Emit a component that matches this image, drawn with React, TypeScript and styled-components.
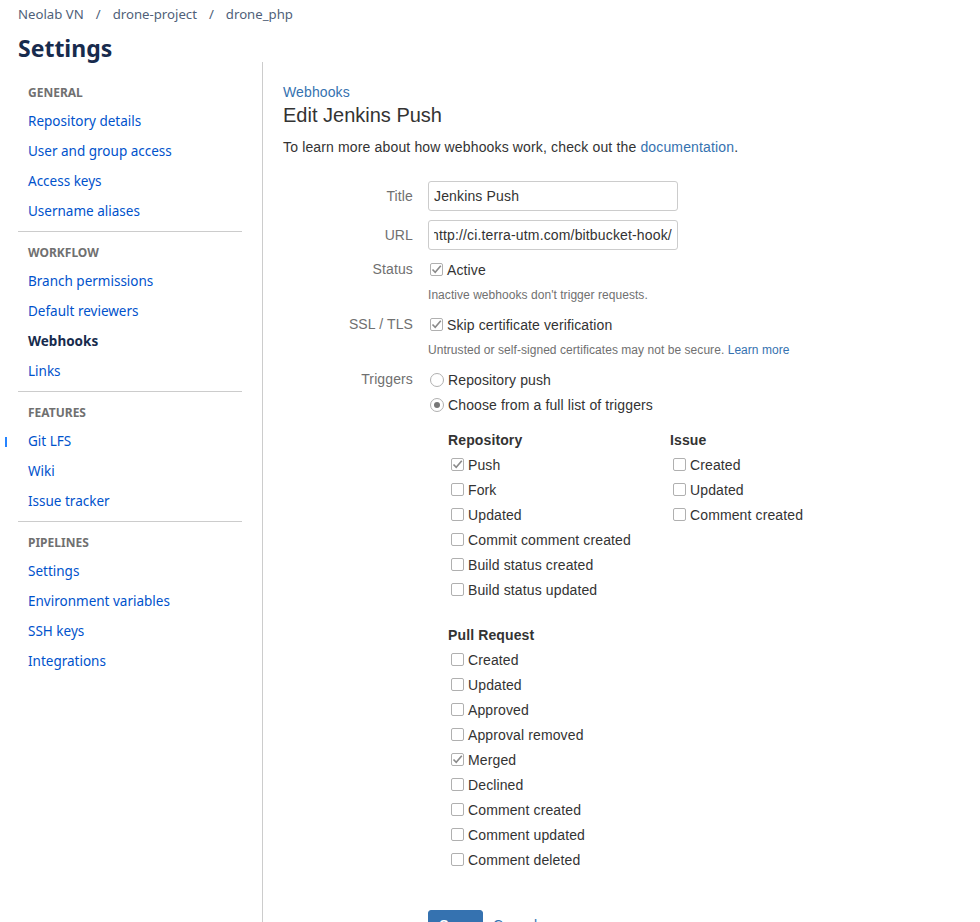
import React, { useEffect, useRef } from "react";
import styled, { createGlobalStyle } from "styled-components";

const Global = createGlobalStyle`
  html, body { margin: 0; padding: 0; background: #fff; overflow: hidden; }
  * { box-sizing: border-box; }
`;

const Page = styled.div`
  position: relative;
  width: 980px;
  height: 922px;
  overflow: hidden;
  display: flex;
  flex-direction: column;
`;

const Header = styled.header`
  padding: 4px 18px 0 18px;
  font-family: "Noto Sans", "Open Sans", sans-serif;
`;

const Crumbs = styled.nav`
  display: flex;
  align-items: center;
  height: 20px;
  font-size: 13.2px;
  color: #505f79;
  gap: 12px;
`;

const Crumb = styled.span``;
const Slash = styled.span`
  color: #505f79;
`;

const Title = styled.h1`
  margin: 10px 0 0 0;
  font-size: 23px;
  line-height: 28px;
  font-weight: 700;
  color: #172b4d;
`;

const Body = styled.div`
  display: flex;
  flex: 1;
`;

const Sidebar = styled.aside`
  width: 263px;
  padding: 18px 20px 0 18px;
  border-right: 1px solid #ccc;
  font-family: "Noto Sans", "Open Sans", sans-serif;
`;

const Section = styled.div<{ $last?: boolean }>`
  padding-bottom: 5px;
  margin-bottom: 8px;
  border-bottom: ${(p) => (p.$last ? "none" : "1px solid #ccc")};
`;

const SectionTitle = styled.div`
  height: 26px;
  line-height: 26px;
  padding-left: 10px;
  font-size: 12px;
  font-weight: 700;
  color: #707070;
  text-transform: uppercase;
`;

const NavItem = styled.a<{ $active?: boolean }>`
  display: block;
  height: 30px;
  line-height: 30px;
  padding-left: 10px;
  font-size: 13.5px;
  color: ${(p) => (p.$active ? "#172b4d" : "#0052cc")};
  font-weight: ${(p) => (p.$active ? 700 : 400)};
  text-decoration: none;
  cursor: pointer;
`;

const Grip = styled.div`
  position: absolute;
  left: 5px;
  top: 437px;
  width: 2px;
  height: 10px;
  background: #2684ff;
`;

const Main = styled.main`
  flex: 1;
  padding: 20px 0 0 20px;
  font-family: "Liberation Sans", Arial, sans-serif;
  color: #333;
  font-size: 14px;
  letter-spacing: 0.12px;
`;

const BackLink = styled.a`
  display: block;
  line-height: 20px;
  font-size: 14px;
  color: #3572b0;
  text-decoration: none;
`;

const Heading = styled.h2`
  margin: 1px 0 0 0;
  font-size: 20px;
  line-height: 24px;
  font-weight: 400;
  letter-spacing: 0;
  color: #333;
`;

const Intro = styled.p`
  margin: 10px 0 0 0;
  line-height: 20px;
  letter-spacing: 0.15px;
`;

const Link = styled.a`
  color: #3572b0;
  text-decoration: none;
`;

const Form = styled.form`
  margin-top: 24px;
  display: flex;
  flex-direction: column;
`;

const Field = styled.div<{ $mt?: number }>`
  display: grid;
  grid-template-columns: 130px 1fr;
  column-gap: 15px;
  margin-top: ${(p) => p.$mt ?? 0}px;
`;

const Label = styled.label<{ $h?: number }>`
  text-align: right;
  color: #707070;
  line-height: ${(p) => p.$h ?? 25}px;
`;

const TextInput = styled.input`
  width: 250px;
  height: 30px;
  border: 1px solid #ccc;
  border-radius: 3px;
  padding: 0 5px;
  font-family: "Liberation Sans", Arial, sans-serif;
  font-size: 14px;
  letter-spacing: 0.15px;
  color: #333;
  outline: none;
`;

const Controls = styled.div`
  display: flex;
  flex-direction: column;
`;

const Option = styled.label<{ $indent?: number }>`
  display: flex;
  align-items: center;
  height: 25px;
  padding-left: ${(p) => p.$indent ?? 2}px;
  gap: 4px;
  color: #333;
  white-space: nowrap;
`;

const Box = styled.span`
  width: 13px;
  height: 13px;
  border: 1px solid #b0b0b0;
  border-radius: 2px;
  background: #fff;
  display: inline-flex;
  align-items: center;
  justify-content: center;
  flex: none;
`;

const Radio = styled.span`
  width: 14px;
  height: 14px;
  border: 1px solid #b0b0b0;
  border-radius: 50%;
  background: #fff;
  display: inline-flex;
  align-items: center;
  justify-content: center;
  flex: none;
`;

const Dot = styled.span`
  width: 6px;
  height: 6px;
  border-radius: 50%;
  background: #777;
`;

const Help = styled.div`
  margin-top: 6px;
  font-size: 12px;
  line-height: 15px;
  letter-spacing: 0.05px;
  color: #707070;
`;

const TriggerGrid = styled.div`
  display: grid;
  grid-template-columns: 222px 1fr;
  margin-top: 11px;
  padding-left: 20px;
`;

const Group = styled.div<{ $mt?: number }>`
  display: flex;
  flex-direction: column;
  margin-top: ${(p) => p.$mt ?? 0}px;
`;

const GroupTitle = styled.div`
  height: 24px;
  line-height: 24px;
  font-weight: 700;
  color: #333;
`;

const Actions = styled.div`
  margin-top: 38px;
  padding-left: 145px;
  display: flex;
  align-items: center;
  gap: 10px;
`;

const SaveButton = styled.button`
  width: 55px;
  height: 30px;
  background: #3572b0;
  color: #fff;
  border: 1px solid #3572b0;
  border-radius: 3px;
  font-family: "Liberation Sans", Arial, sans-serif;
  font-size: 14px;
  font-weight: 700;
`;

const Check = () => (
  <svg width="11" height="11" viewBox="0 0 11 11">
    <path d="M1.5 5.5 L4.2 8.3 L9.8 1.8" fill="none" stroke="#8a8a8a" strokeWidth="1.6" />
  </svg>
);

const CheckItem = ({ label, checked, indent }: { label: string; checked?: boolean; indent?: number }) => (
  <Option $indent={indent}>
    <Box>{checked && <Check />}</Box>
    <span>{label}</span>
  </Option>
);

const nav = [
  { title: "General", items: ["Repository details", "User and group access", "Access keys", "Username aliases"] },
  { title: "Workflow", items: ["Branch permissions", "Default reviewers", "Webhooks", "Links"] },
  { title: "Features", items: ["Git LFS", "Wiki", "Issue tracker"] },
  { title: "Pipelines", items: ["Settings", "Environment variables", "SSH keys", "Integrations"] },
];

const repoTriggers: [string, boolean][] = [
  ["Push", true],
  ["Fork", false],
  ["Updated", false],
  ["Commit comment created", false],
  ["Build status created", false],
  ["Build status updated", false],
];
const issueTriggers = ["Created", "Updated", "Comment created"];
const prTriggers: [string, boolean][] = [
  ["Created", false],
  ["Updated", false],
  ["Approved", false],
  ["Approval removed", false],
  ["Merged", true],
  ["Declined", false],
  ["Comment created", false],
  ["Comment updated", false],
  ["Comment deleted", false],
];

export default function App() {
  const urlRef = useRef<HTMLInputElement>(null);
  useEffect(() => {
    if (urlRef.current) urlRef.current.scrollLeft = 10000;
  }, []);
  return (
    <Page>
      <Global />
      <Header>
        <Crumbs>
          <Crumb>Neolab VN</Crumb>
          <Slash>/</Slash>
          <Crumb>drone-project</Crumb>
          <Slash>/</Slash>
          <Crumb>drone_php</Crumb>
        </Crumbs>
        <Title>Settings</Title>
      </Header>
      <Body>
        <Sidebar>
          {nav.map((s, i) => (
            <Section key={s.title} $last={i === nav.length - 1}>
              <SectionTitle>{s.title}</SectionTitle>
              {s.items.map((it) => (
                <NavItem key={it} $active={it === "Webhooks"}>
                  {it}
                </NavItem>
              ))}
            </Section>
          ))}
        </Sidebar>
        <Main>
          <BackLink>Webhooks</BackLink>
          <Heading>Edit Jenkins Push</Heading>
          <Intro>
            To learn more about how webhooks work, check out the <Link>documentation</Link>.
          </Intro>
          <Form onSubmit={(e) => e.preventDefault()}>
            <Field>
              <Label $h={30}>Title</Label>
              <TextInput defaultValue="Jenkins Push" />
            </Field>
            <Field $mt={9}>
              <Label $h={30}>URL</Label>
              <TextInput ref={urlRef} defaultValue="http://ci.terra-utm.com/bitbucket-hook/" />
            </Field>
            <Field $mt={7}>
              <Label>Status</Label>
              <Controls>
                <CheckItem label="Active" checked />
                <Help>Inactive webhooks don't trigger requests.</Help>
              </Controls>
            </Field>
            <Field $mt={9}>
              <Label>SSL / TLS</Label>
              <Controls>
                <CheckItem label="Skip certificate verification" checked />
                <Help>
                  Untrusted or self-signed certificates may not be secure. <Link>Learn more</Link>
                </Help>
              </Controls>
            </Field>
            <Field $mt={9}>
              <Label>Triggers</Label>
              <Controls>
                <Option>
                  <Radio />
                  <span>Repository push</span>
                </Option>
                <Option>
                  <Radio>
                    <Dot />
                  </Radio>
                  <span>Choose from a full list of triggers</span>
                </Option>
                <TriggerGrid>
                  <Group>
                    <GroupTitle>Repository</GroupTitle>
                    {repoTriggers.map(([l, c]) => (
                      <CheckItem key={l} label={l} checked={c} indent={3} />
                    ))}
                  </Group>
                  <Group>
                    <GroupTitle>Issue</GroupTitle>
                    {issueTriggers.map((l) => (
                      <CheckItem key={l} label={l} indent={3} />
                    ))}
                  </Group>
                  <Group $mt={21}>
                    <GroupTitle>Pull Request</GroupTitle>
                    {prTriggers.map(([l, c]) => (
                      <CheckItem key={l} label={l} checked={c} indent={3} />
                    ))}
                  </Group>
                </TriggerGrid>
              </Controls>
            </Field>
            <Actions>
              <SaveButton type="submit">Save</SaveButton>
              <Link>Cancel</Link>
            </Actions>
          </Form>
        </Main>
      </Body>
      <Grip />
    </Page>
  );
}
